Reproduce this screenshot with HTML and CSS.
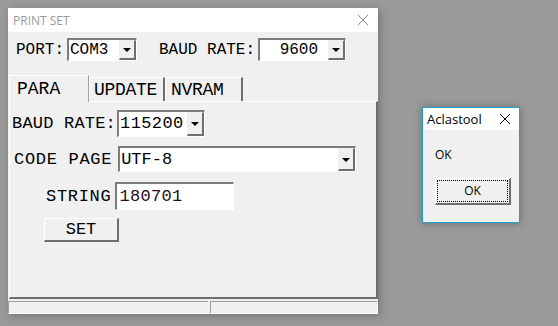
FILE: index.html
```html
<!doctype html>
<html lang="en">
<head>
<meta charset="utf-8" />
<title>PRINT SET</title>
<link rel="stylesheet" href="styles.css">
</head>
<body>

<div class="win main">
	<div class="titlebar">
		<span class="title">PRINT SET</span>
		<svg class="close" width="12" height="12" viewBox="0 0 12 12"><path d="M1 1L11 11M11 1L1 11" stroke="#8a8a8a" stroke-width="1"/></svg>
	</div>
	<div class="body">
		<div class="toprow">
			<span class="lbl">PORT:</span>
			<div class="combo port"><span class="val">COM3</span><span class="btn"><i></i></span></div>
			<span class="lbl baud">BAUD RATE:</span>
			<div class="combo rate"><span class="val right">9600</span><span class="btn"><i></i></span></div>
		</div>

		<div class="tabs">
			<div class="tab sel">PARA</div>
			<div class="tab t2">UPDATE</div>
			<div class="tab t3">NVRAM</div>
		</div>
		<div class="panel">
			<div class="row r1">
				<span class="lbl">BAUD RATE:</span>
				<div class="combo br"><span class="val">115200</span><span class="btn"><i></i></span></div>
			</div>
			<div class="row r2">
				<span class="lbl cp">CODE PAGE</span>
				<div class="combo cpage"><span class="val">UTF-8</span><span class="btn"><i></i></span></div>
			</div>
			<div class="row r3">
				<span class="lbl str">STRING</span>
				<div class="edit"><span class="val">180701</span></div>
			</div>
			<div class="setbtn">SET</div>
		</div>
		<div class="status">
			<div class="pane p1"></div>
			<div class="pane p2"></div>
		</div>
	</div>
</div>

<div class="win dlg">
	<div class="titlebar">
		<span class="title">Aclastool</span>
		<svg class="close" width="12" height="12" viewBox="0 0 12 12"><path d="M1 1L11 11M11 1L1 11" stroke="#000" stroke-width="1"/></svg>
	</div>
	<div class="dbody">
		<div class="msg">OK</div>
		<div class="okbtn"><span>OK</span></div>
	</div>
</div>

</body>
</html>
```
FILE: styles.css
```css
html,body{margin:0;padding:0}
body{width:558px;height:326px;background:#9a9a9a;position:relative;overflow:hidden;font-family:"Liberation Mono",monospace;font-size:16px;color:#000}

.win{position:absolute;background:#f0f0f0;box-shadow:2px 2px 8px rgba(0,0,0,0.25)}
.main{left:8px;top:8px;width:370px;height:306px}
.titlebar{height:24px;background:#fff;display:flex;align-items:center;justify-content:space-between;padding:0 9px 0 5px;font-family:"Open Sans","Noto Sans",sans-serif;font-size:12px}
.main .title{color:#9a9a9a}
.close{display:block}

.body{display:flex;flex-direction:column;height:282px}
.toprow{display:flex;align-items:center;padding:6px 0 0 8px;height:23px}
.lbl{white-space:pre;font-family:"Liberation Mono",monospace}
.baud{margin-left:22px}

.combo{display:flex;align-items:stretch;background:#fff;border-style:solid;border-width:2px 1px 1px 2px;border-color:#7c7c7c #fff #fff #7c7c7c;height:20px;box-sizing:content-box}
.combo .val{flex:1;line-height:20px;padding-left:1px;white-space:pre;font-family:"Liberation Mono",monospace}
.combo .val.right{text-align:right;padding-right:10px}
.btn{width:14px;background:#f0f0f0;border-style:solid;border-width:1px 2px 2px 1px;border-color:#f0f0f0 #6e6e6e #6e6e6e #f0f0f0;display:flex;align-items:center;justify-content:center}
.btn i{width:0;height:0;border-left:4px solid transparent;border-right:4px solid transparent;border-top:4px solid #000;margin-top:1px}
.port{width:67px;margin-left:3px}
.rate{width:85px;margin-left:3px}

.tabs{display:flex;align-items:flex-end;margin-top:13px;padding-left:1px;height:27px}
.tab{box-sizing:border-box;height:24px;line-height:24px;padding:0 0 0 4px;border-style:solid;border-width:1px 2px 0 1px;border-color:#fff #6e6e6e #fff #fff;font-family:"Liberation Mono",monospace;font-size:18px;letter-spacing:-0.3px;white-space:nowrap}
.t2{width:76px}
.t3{width:78px;padding-left:5px}
.tab.sel{width:80px;height:27px;line-height:26px;padding-left:7px;border-right:1px solid #a0a0a0;position:relative;z-index:1;margin-bottom:-1px;background:#f0f0f0;letter-spacing:0}

.panel{flex:1;margin:0 0 0 1px;border-style:solid;border-width:1px 2px 2px 1px;border-color:#fff #6e6e6e #6e6e6e #fff;padding:8px 0 0 2px}
.row{display:flex;align-items:center}
.r1{margin-bottom:9px}
.r2{margin-bottom:10px}
.r3{margin-bottom:8px}
.panel .lbl{font-size:17px}
.r1 .lbl{letter-spacing:0.2px}
.br{width:85px;margin-left:1px;height:24px}
.br .val{line-height:24px;font-size:17px;letter-spacing:0.4px}
.cp{margin-left:2px;letter-spacing:0.7px}
.cpage{width:235px;margin-left:6px;height:23px}
.cpage .val{line-height:23px;font-size:17px}
.str{margin-left:34px;letter-spacing:0.7px}
.edit{width:116px;height:25px;margin-left:4px;background:#fff;border-style:solid;border-width:2px 1px 1px 2px;border-color:#7c7c7c #fff #fff #7c7c7c;display:flex;align-items:center}
.edit .val{font-size:17px;padding-left:2px;color:#2a0a14;letter-spacing:0.3px;font-family:"Liberation Mono",monospace}
.setbtn{margin:0 0 0 32px;width:72px;height:21px;border-style:solid;border-width:1px 2px 2px 1px;border-color:#fff #6e6e6e #6e6e6e #fff;text-align:center;line-height:21px;font-size:17px;font-family:"Liberation Mono",monospace}

.status{display:flex;height:13px;margin-top:2px;gap:2px}
.pane{border-style:solid;border-width:1px 0 0 1px;border-color:#a0a0a0;border-bottom:1px solid #fff;box-sizing:border-box;height:13px}
.p1{width:200px}
.p2{flex:1;border-right:1px solid #fff}

.dlg{left:422px;top:107px;width:96px;height:114px;border:1px solid #1ba1d6;box-shadow:0 0 8px rgba(0,0,0,0.3)}
.dlg .titlebar{height:22px;padding:0 8px 0 4px;font-size:13px;color:#000}
.dbody{padding:0 0 0 12px}
.msg{font-family:"Open Sans","Noto Sans",sans-serif;font-size:12px;margin-top:16px;height:18px}
.okbtn{margin-top:14px;width:71px;height:22px;border-style:solid;border-width:1px 2px 2px 1px;border-color:#fff #6e6e6e #6e6e6e #fff;padding:1px;box-sizing:content-box}
.okbtn span{display:block;height:20px;border:1px dotted #000;text-align:center;line-height:20px;font-family:"Open Sans","Noto Sans",sans-serif;font-size:12px}
```
